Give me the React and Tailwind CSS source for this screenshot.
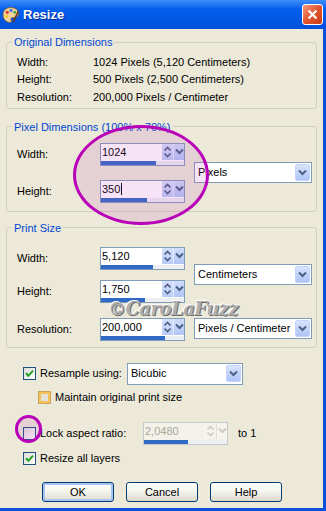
import React from 'react';
import clsx from 'clsx';

const SpinArrows = ({ disabled }) => {
    const c = disabled ? '#CFCDC2' : '#4D6185';
    return (
        <svg width="9" height="14" viewBox="0 0 9 14">
            <path d="M1.5 5.5 L4.5 2.5 L7.5 5.5" stroke={c} strokeWidth="1.7" fill="none" />
            <path d="M1.5 8.5 L4.5 11.5 L7.5 8.5" stroke={c} strokeWidth="1.7" fill="none" />
        </svg>
    );
};

const Chevron = ({ color = '#4D6185' }) => (
    <svg width="9" height="7" viewBox="0 0 9 7">
        <path d="M1 1.5 L4.5 5 L8 1.5" stroke={color} strokeWidth="2" fill="none" />
    </svg>
);

const SpinInput = ({ value, bar, disabled, caret, className }) => (
    <div
        className={clsx(
            'w-[85px] h-[23px] border flex flex-col',
            disabled ? 'border-[#C4C8CF] bg-[#F2F1EA] text-[#ACA899]' : 'border-[#7F9DB9] bg-white',
            className
        )}
    >
        <div className="flex h-[16px]">
            <div className="flex-1 pl-[1px] leading-[16px] flex items-center">
                {value}
                {caret && <span className="ml-[1px] w-[1px] h-[12px] bg-black" />}
            </div>
            <div className={clsx('w-[11px] flex items-center justify-center', disabled ? 'bg-[#F4F3EE]' : 'bg-linear-to-b from-[#D5E0FC] to-[#B9CCF7]')}>
                <SpinArrows disabled={disabled} />
            </div>
            <div className={clsx('w-[11px] flex items-center justify-center border-l', disabled ? 'bg-[#F4F3EE] border-[#E2E0D6]' : 'bg-linear-to-b from-[#D0DCFB] to-[#B0C5F6] border-[#E6ECFD]')}>
                <Chevron color={disabled ? '#CFCDC2' : '#4D6185'} />
            </div>
        </div>
        <div className="mt-[1px] h-[4px] bg-[#ECEEF2]">
            <div className="h-full bg-[#316AC5]" style={{ width: bar }} />
        </div>
    </div>
);

const Select = ({ value, className }) => (
    <div className={clsx('h-[21px] border border-[#7F9DB9] bg-white flex items-center', className)}>
        <span className="flex-1 pl-[3px] whitespace-nowrap">{value}</span>
        <div className="w-[15px] h-[17px] mr-[1px] rounded-[2px] border border-[#C3D3FD] bg-linear-to-b from-[#D9E4FD] to-[#ADC4F6] flex items-center justify-center">
            <Chevron />
        </div>
    </div>
);

const Check = ({ checked, tone }) => (
    <div
        className={clsx(
            'w-[13px] h-[13px] shrink-0 border flex items-center justify-center',
            tone === 'orange'
                ? 'border-[#C9A45C] bg-[#E4E1D6] shadow-[inset_0_0_0_2px_#F7C15A]'
                : 'border-[#1C5180] bg-linear-to-br from-[#DCDCD7] to-white'
        )}
    >
        {checked && (
            <svg width="9" height="9" viewBox="0 0 9 9">
                <path d="M1 4.2 L3.4 6.8 L8 1.6" stroke="#21A121" strokeWidth="2" fill="none" />
            </svg>
        )}
    </div>
);

const Btn = ({ label, isDefault }) => (
    <button
        className={clsx(
            'w-[72px] h-[20px] rounded-[3px] border border-[#003C74] bg-linear-to-b from-white via-[#F3F3EE] to-[#DCD8CC] leading-[18px] text-center',
            isDefault && 'shadow-[inset_0_0_0_2px_#A8C4F0]'
        )}
    >
        {label}
    </button>
);

const Group = ({ title, className, children }) => (
    <fieldset className={clsx('border border-[#D0D0BF] rounded-[3px]', className)}>
        <legend className="ml-[5px] px-[2px] leading-[14px] text-[#0046D5]">{title}</legend>
        {children}
    </fieldset>
);

export default function App() {
    return (
        <div className="relative w-[326px] h-[511px] flex flex-col bg-[#ECE9D8] text-[11px] text-black font-['Liberation_Sans',Arial,sans-serif] overflow-hidden">
            {/* title bar */}
            <div className="h-[29px] shrink-0 flex items-center bg-linear-to-b from-[#3D8DF9] via-[#0560EE] via-30% to-[#0050DC]">
                <svg width="18" height="18" viewBox="0 0 17 17" className="ml-[2px]">
                    <path d="M8 1.5 C3.5 1.5 1 4.5 1 8.5 C1 12.5 4 15.5 7.5 15.5 C9 15.5 9 14 8.5 13 C8 12 8.5 11 10 11 C13 11 15.5 10 15.5 7 C15.5 3.5 12 1.5 8 1.5 Z" fill="#F2D39B" stroke="#8A5A2B" strokeWidth="0.8" />
                    <circle cx="5" cy="6" r="1.5" fill="#E23A2A" />
                    <circle cx="8.5" cy="4.3" r="1.4" fill="#2E6FE8" />
                    <circle cx="4.6" cy="10" r="1.4" fill="#F3C21A" />
                    <circle cx="12" cy="6" r="1.3" fill="#2FA64A" />
                    <path d="M10.5 15 L15.5 5" stroke="#6B3E1E" strokeWidth="1.6" />
                </svg>
                <span className="ml-[3px] text-white font-bold text-[13px] [text-shadow:1px_1px_0_#0A2D9A]">Resize</span>
                <div className="ml-auto mr-[3px] w-[21px] h-[21px] rounded-[3px] border border-white bg-linear-to-br from-[#F29A78] via-[#E2542C] to-[#C93A16] flex items-center justify-center">
                    <svg width="11" height="11" viewBox="0 0 11 11">
                        <path d="M1.5 1.5 L9.5 9.5 M9.5 1.5 L1.5 9.5" stroke="white" strokeWidth="2.2" />
                    </svg>
                </div>
            </div>

            {/* body */}
            <div className="flex-1 flex flex-col px-[6px] border-r-[3px] border-b-[3px] border-[#0A50DA]">
                <Group title="Original Dimensions" className="mt-[6px]">
                    <div className="pt-[4px] pb-[2px] pl-[10px] grid grid-cols-[76px_1fr] auto-rows-[17.5px] items-center">
                        <span>Width:</span>
                        <span>1024 Pixels (5,120 Centimeters)</span>
                        <span>Height:</span>
                        <span>500 Pixels (2,500 Centimeters)</span>
                        <span>Resolution:</span>
                        <span>200,000 Pixels / Centimeter</span>
                    </div>
                </Group>

                <Group title="Pixel Dimensions (100% x 70%)" className="mt-[11px]">
                    <div className="pt-[9px] pb-[8px] pl-[10px] grid grid-cols-[83px_94px_118px] gap-y-[14px] items-center">
                        <span>Width:</span>
                        <SpinInput value="1024" bar="66%" />
                        <div className="row-span-2">
                            <Select value="Pixels" className="w-[118px]" />
                        </div>
                        <span>Height:</span>
                        <SpinInput value="350" bar="55%" caret />
                    </div>
                </Group>

                <Group title="Print Size" className="mt-[9px]">
                    <div className="pt-[12px] pb-[6px] pl-[10px] grid grid-cols-[83px_94px_118px] gap-y-[10px] items-center">
                        <span>Width:</span>
                        <SpinInput value="5,120" bar="63%" />
                        <div className="row-span-2">
                            <Select value="Centimeters" className="w-[118px]" />
                        </div>
                        <span>Height:</span>
                        <SpinInput value="1,750" bar="53%" />
                        <span className="mt-[5px]">Resolution:</span>
                        <SpinInput value="200,000" bar="77%" className="mt-[5px]" />
                        <Select value="Pixels / Centimeter" className="w-[118px] mt-[5px] self-start" />
                    </div>
                </Group>

                <div className="mt-[15px] h-[22px] flex items-center pl-[17px]">
                    <Check checked />
                    <span className="ml-[4px] w-[87px]">Resample using:</span>
                    <Select value="Bicubic" className="w-[116px] h-[22px]" />
                </div>
                <div className="mt-[5px] h-[16px] flex items-center pl-[32px]">
                    <Check tone="orange" />
                    <span className="ml-[4px]">Maintain original print size</span>
                </div>
                <div className="mt-[16px] h-[23px] flex items-center pl-[17px]">
                    <Check />
                    <span className="ml-[4px] w-[103px]">Lock aspect ratio:</span>
                    <SpinInput value="2,0480" bar="53%" disabled />
                    <span className="ml-[10px]">to 1</span>
                </div>
                <div className="mt-[6px] h-[16px] flex items-center pl-[17px]">
                    <Check checked />
                    <span className="ml-[4px]">Resize all layers</span>
                </div>
                <div className="mt-[15px] flex gap-[12px] pl-[36px]">
                    <Btn label="OK" isDefault />
                    <Btn label="Cancel" />
                    <Btn label="Help" />
                </div>
            </div>

            {/* annotations drawn over the dialog */}
            <div className="absolute left-[73px] top-[125px] w-[136px] h-[100px] rounded-[50%] border-[3px] border-[#B800B8] bg-[rgba(192,64,192,0.15)] pointer-events-none" />
            <div className="absolute left-[15px] top-[415px] w-[27px] h-[28px] rounded-[50%] border-[3px] border-[#B800B8] bg-[rgba(192,64,192,0.15)] pointer-events-none" />
            <div className="absolute left-[108px] top-[295px] text-[18px] italic font-bold font-['DejaVu_Serif',serif] text-[#B0B0B0] tracking-[-0.5px] [text-shadow:1px_1px_0_#6E6E6E,-1px_-1px_0_#FFFFFF] pointer-events-none">
                ©CaroLaFuzz
            </div>
        </div>
    );
}
